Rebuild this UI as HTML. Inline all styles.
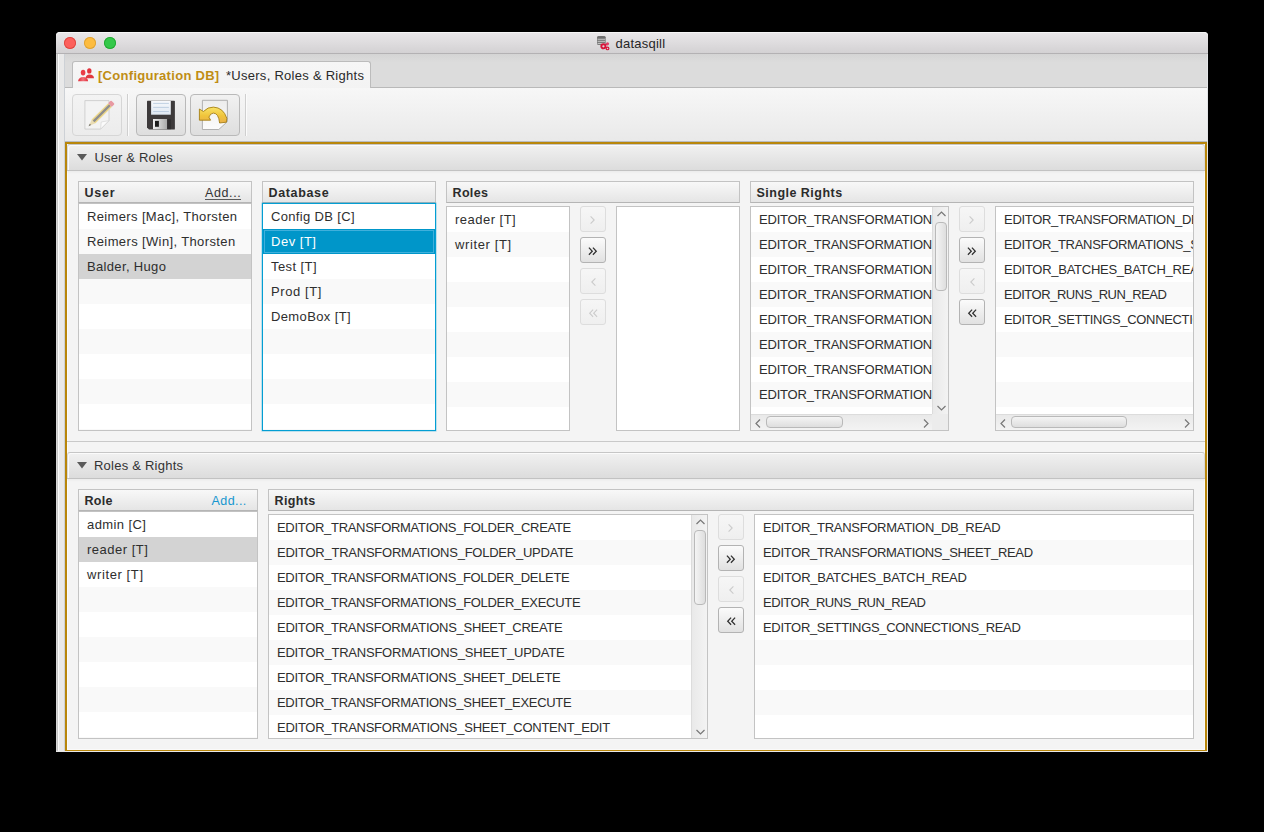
<!DOCTYPE html><html><head><meta charset="utf-8"><style>
*{box-sizing:border-box;margin:0;padding:0}
html,body{width:1264px;height:832px;overflow:hidden;background:#000}
body{position:relative;font-family:"Liberation Sans",sans-serif}
div{position:absolute}
.t{white-space:nowrap}
svg{position:absolute;overflow:visible}
</style></head><body>
<div style="left:56px;top:32px;width:1152px;height:720px;background:#f4f4f4;border-radius:4px 4px 0 0"></div>
<div style="left:56px;top:32px;width:1152px;height:21px;background:linear-gradient(#e9e7e9,#d3d1d3);border-radius:4px 4px 0 0;border-top:1px solid #f6f6f6"></div>
<div style="left:56px;top:53px;width:1152px;height:1px;background:#b3b1b3"></div>
<div style="left:64px;top:37px;width:12px;height:12px;border-radius:50%;background:#fc605c;box-shadow:inset 0 0 0 0.9px #de4841"></div>
<div style="left:84px;top:37px;width:12px;height:12px;border-radius:50%;background:#fdbc40;box-shadow:inset 0 0 0 0.9px #dea236"></div>
<div style="left:104px;top:37px;width:12px;height:12px;border-radius:50%;background:#34c84a;box-shadow:inset 0 0 0 0.9px #24a934"></div>
<svg style="left:594px;top:34px" width="18" height="18" viewBox="0 0 18 18">
<rect x="3" y="2.2" width="8.7" height="8.8" rx="1.5" fill="#7c7c7c"/>
<ellipse cx="7.35" cy="3.2" rx="4.35" ry="1.3" fill="#6e6e6e"/>
<path d="M3.6 5.3h7.5M3.6 7.4h7.5M3.6 9.5h7.5" stroke="#c9c9c9" stroke-width="0.9"/>
<circle cx="9.4" cy="12.3" r="2.1" fill="none" stroke="#d8143a" stroke-width="1.9"/>
<circle cx="13.5" cy="9.8" r="1.6" fill="#e04068"/>
<circle cx="13.5" cy="14.4" r="1.35" fill="none" stroke="#d8143a" stroke-width="1.2"/>
<path d="M11.3 11.3L12.6 10.5M11.3 13.2L12.5 13.9" stroke="#d8143a" stroke-width="1"/>
</svg>
<div class="t" style="left:615.5px;top:37.00px;font-size:13px;line-height:13px;font-weight:400;color:#262626;letter-spacing:0.233px;">datasqill</div>
<div style="left:56px;top:54px;width:9px;height:698px;background:linear-gradient(to right,#d6d6d6 0 1px,#c6c6c6 1px 2px,#fafafa 2px 3px,#e9e9e9 3px 8px,#cdd1d6 8px 9px)"></div>
<div style="left:65px;top:54px;width:1143px;height:33px;background:linear-gradient(#d4d4d4,#dcdcdc 25%,#dcdcdc)"></div>
<div style="left:65px;top:87px;width:1143px;height:1px;background:#b9b9b9"></div>
<div style="left:72px;top:61px;width:299px;height:27px;background:linear-gradient(#f6f6f6,#f3f3f3);border:1px solid #bcbcbc;border-bottom:none;border-radius:3px 3px 0 0"></div>
<svg style="left:74px;top:64px" width="24" height="22" viewBox="0 0 24 22">
<defs><linearGradient id="pb" x1="0" x2="1"><stop offset="0" stop-color="#e22a35"/><stop offset="0.5" stop-color="#f0707a"/><stop offset="1" stop-color="#e22a35"/></linearGradient></defs>
<ellipse cx="15.3" cy="6.9" rx="2.2" ry="2.7" fill="#e2323c"/>
<path d="M11.6 14.2Q12 10.6 15.5 10.6Q19.8 10.8 20 14.2Z" fill="#e0383f"/>
<ellipse cx="9.1" cy="8.6" rx="2.3" ry="2.9" fill="#ea3d47"/>
<path d="M4.1 17.3Q4.5 13 9.2 12.9Q13.8 13 14.1 17.3Z" fill="url(#pb)"/>
</svg>
<div class="t" style="left:98px;top:69.00px;font-size:13px;line-height:13px;font-weight:700;color:#c08d14;letter-spacing:0.291px;">[Configuration DB]</div>
<div class="t" style="left:226px;top:69.00px;font-size:13px;line-height:13px;font-weight:400;color:#2a2a2a;letter-spacing:0.272px;">*Users, Roles &amp; Rights</div>
<div style="left:65px;top:88px;width:1143px;height:54px;background:linear-gradient(#f7f7f7,#e9e9e9)"></div>
<div style="left:65px;top:141px;width:1143px;height:1px;background:#b9bcc2"></div>
<div style="left:72px;top:94px;width:50px;height:42px;border:1px solid #d6d6d6;border-radius:4px;background:linear-gradient(#f3f3f3,#ececec)"></div>
<div style="left:127px;top:94px;width:1px;height:42px;background:#cfcfcf"></div>
<div style="left:128px;top:94px;width:1px;height:42px;background:#fbfbfb"></div>
<div style="left:136px;top:94px;width:50px;height:42px;border:1px solid #b9b9b9;border-radius:4px;background:linear-gradient(#f1f1f1,#dedede)"></div>
<div style="left:190px;top:94px;width:50px;height:42px;border:1px solid #b9b9b9;border-radius:4px;background:linear-gradient(#f1f1f1,#dedede)"></div>
<div style="left:245px;top:94px;width:1px;height:42px;background:#cfcfcf"></div>
<div style="left:246px;top:94px;width:1px;height:42px;background:#fbfbfb"></div>
<svg style="left:78px;top:96px" width="40" height="38" viewBox="0 0 40 38">
<path d="M6.9 4.6H31V24.6L22.6 33.1H6.9Z" fill="#f3f3f3" stroke="#cdcdcd" stroke-width="0.9"/>
<path d="M22.6 33.1L23.2 26L31 24.6Z" fill="#fbfbfb" stroke="#d6d6d6" stroke-width="0.7"/>
<g transform="translate(10.6,30.3) rotate(-44.8)">
<path d="M0 0L7 -2.5H30V2.5H7Z" fill="#e9dcb4"/>
<path d="M0 0L2.6 -0.9V0.9Z" fill="#6d6d6d"/>
<rect x="7" y="-2.5" width="23" height="5" fill="#efd98a"/>
<rect x="7" y="-1.2" width="23" height="2.4" fill="#8f8f8f"/>
<rect x="30" y="-2.6" width="4.2" height="5.2" rx="1" fill="#e89aa2"/>
</g>
</svg>
<svg style="left:142px;top:96px" width="38" height="38" viewBox="0 0 38 38">
<defs><linearGradient id="sh" x1="0" x2="1"><stop offset="0" stop-color="#f0f0f0"/><stop offset="1" stop-color="#a9a9a9"/></linearGradient>
<linearGradient id="lb" x1="0" y1="0" x2="0" y2="1"><stop offset="0" stop-color="#f7f9fc"/><stop offset="1" stop-color="#dfe8f2"/></linearGradient></defs>
<path d="M5.6 4.8H32.2Q32.9 4.8 32.9 5.5V32.9Q32.9 33.6 32.2 33.6H7L5 31.6V5.4Q5 4.8 5.6 4.8Z" fill="#3d3a3b"/>
<rect x="9.1" y="4.9" width="19.7" height="13.8" fill="url(#lb)"/>
<path d="M11.2 7.4H26.9M11.2 11.4H26.9M11.2 15.5H26.9" stroke="#b3c7dc" stroke-width="0.8"/>
<rect x="11" y="23" width="14.1" height="10.2" fill="url(#sh)"/>
<rect x="13" y="24.9" width="3.9" height="5.9" fill="#1c1c1c"/>
<rect x="25.3" y="23.2" width="3.5" height="10" fill="#2f2d2e"/>
</svg>
<svg style="left:194px;top:96px" width="40" height="38" viewBox="0 0 40 38">
<defs><linearGradient id="pg" x1="0" y1="0" x2="0" y2="1"><stop offset="0" stop-color="#ececec"/><stop offset="1" stop-color="#fcfcfc"/></linearGradient>
<linearGradient id="ar" x1="0" y1="0" x2="0" y2="1"><stop offset="0" stop-color="#f8e46a"/><stop offset="0.55" stop-color="#f0c43a"/><stop offset="1" stop-color="#e9b04a"/></linearGradient></defs>
<path d="M8.4 4.3H33.4V25.6L24.8 33.5H8.4Z" fill="url(#pg)" stroke="#a9a9a9" stroke-width="0.9"/>
<path d="M5.4 13L9.4 15.5Q13.8 10.9 19.4 11.1Q29.4 11.6 32.8 22.2L32.4 26.2L25.6 27Q24.6 17.2 19.4 17.1Q16.4 17.2 14.9 21.1L16.6 24.2H5.4Z" fill="url(#ar)" stroke="#9c7406" stroke-width="0.8" stroke-linejoin="round"/>
</svg>
<div style="left:65px;top:142px;width:1142px;height:609px;border:2px solid #b8860b;border-bottom-width:1px;background:#f4f4f4"></div>
<div style="left:1207px;top:54px;width:1px;height:698px;background:#e2e4e7"></div>
<div style="left:1204px;top:144px;width:1px;height:606px;background:#fafafa"></div>
<div style="left:67px;top:749px;width:1138px;height:1px;background:#fafafa"></div>
<div style="left:56px;top:751px;width:1152px;height:1px;background:#e8e8e8"></div>
<div style="left:67px;top:144px;width:1px;height:605px;background:#fbfbfb"></div>
<div style="left:67px;top:144px;width:1138px;height:27px;background:linear-gradient(#f1f1f1,#dcdcdc);border:1px solid #c6c6c6;border-left-color:#d8d8d8;border-right-color:#d8d8d8;border-radius:3px 3px 0 0;box-shadow:inset 1px 1px 0 #fbfbfb"></div>
<div style="left:67px;top:170px;width:1138px;height:1px;background:#c2c2c2"></div>
<div style="left:67px;top:171px;width:1138px;height:3px;background:linear-gradient(rgba(0,0,0,0.035),rgba(0,0,0,0))"></div>
<svg style="left:77px;top:154px" width="10" height="7" viewBox="0 0 10 7"><path d="M0 0H10L5 6.5Z" fill="#5a5a5a"/></svg>
<div class="t" style="left:94.5px;top:150.70px;font-size:13px;line-height:13px;font-weight:400;color:#333;letter-spacing:0.16px;">User &amp; Roles</div>
<div style="left:67px;top:441px;width:1138px;height:1px;background:#c9c9c9"></div>
<div style="left:67px;top:452px;width:1138px;height:27px;background:linear-gradient(#f1f1f1,#dcdcdc);border:1px solid #c6c6c6;border-left-color:#d8d8d8;border-right-color:#d8d8d8;border-radius:3px 3px 0 0;box-shadow:inset 1px 1px 0 #fbfbfb"></div>
<div style="left:67px;top:478px;width:1138px;height:1px;background:#c2c2c2"></div>
<div style="left:67px;top:479px;width:1138px;height:3px;background:linear-gradient(rgba(0,0,0,0.035),rgba(0,0,0,0))"></div>
<svg style="left:77px;top:462px" width="10" height="7" viewBox="0 0 10 7"><path d="M0 0H10L5 6.5Z" fill="#5a5a5a"/></svg>
<div class="t" style="left:94px;top:458.70px;font-size:13px;line-height:13px;font-weight:400;color:#333;letter-spacing:0.23px;">Roles &amp; Rights</div>
<div style="left:78px;top:181px;width:174px;height:22px;background:linear-gradient(#f8f8f8,#e5e5e5);border:1px solid #c3c3c3;border-bottom-color:#b5b5b5"></div>
<div class="t" style="left:84.5px;top:186.92px;font-size:12.5px;line-height:12.5px;font-weight:700;color:#2b2b2b;letter-spacing:0.751px;">User</div>
<div class="t" style="left:205px;top:187.42px;font-size:12.5px;line-height:12.5px;font-weight:400;color:#333;letter-spacing:0.621px;">Add...</div>
<div style="left:205px;top:199px;width:36px;height:1px;background:#5a5a5a"></div>
<div style="left:78px;top:203px;width:174px;height:228px;border:1px solid #c3c3c3;border-top:none;background:#fff"><div style="left:0px;top:0px;width:172px;height:227px;overflow:hidden;background:#fff"><div style="left:0px;top:1px;width:172px;height:25px;background:#ffffff"></div><div class="t" style="left:8px;top:7.00px;font-size:13px;line-height:13px;font-weight:400;color:#2e2e2e;letter-spacing:0.361px;">Reimers [Mac], Thorsten</div><div style="left:0px;top:26px;width:172px;height:25px;background:#f9f9f9"></div><div class="t" style="left:8px;top:32.00px;font-size:13px;line-height:13px;font-weight:400;color:#2e2e2e;letter-spacing:0.373px;">Reimers [Win], Thorsten</div><div style="left:0px;top:51px;width:172px;height:25px;background:#d3d3d3"></div><div class="t" style="left:8px;top:57.00px;font-size:13px;line-height:13px;font-weight:400;color:#2e2e2e;letter-spacing:0.336px;">Balder, Hugo</div><div style="left:0px;top:76px;width:172px;height:25px;background:#f9f9f9"></div><div style="left:0px;top:101px;width:172px;height:25px;background:#ffffff"></div><div style="left:0px;top:126px;width:172px;height:25px;background:#f9f9f9"></div><div style="left:0px;top:151px;width:172px;height:25px;background:#ffffff"></div><div style="left:0px;top:176px;width:172px;height:25px;background:#f9f9f9"></div><div style="left:0px;top:201px;width:172px;height:25px;background:#ffffff"></div><div style="left:0px;top:226px;width:172px;height:25px;background:#f9f9f9"></div></div></div>
<div style="left:78px;top:203px;width:174px;height:1px;background:#c2c2c2"></div>
<div style="left:262px;top:181px;width:174px;height:22px;background:linear-gradient(#f8f8f8,#e5e5e5);border:1px solid #c3c3c3;border-bottom-color:#b5b5b5"></div>
<div class="t" style="left:268.5px;top:186.92px;font-size:12.5px;line-height:12.5px;font-weight:700;color:#2b2b2b;letter-spacing:0.651px;">Database</div>
<div style="left:262px;top:203px;width:174px;height:228px;border:1px solid #039ed3;box-shadow:0 0 0 0.5px rgba(3,158,211,0.45),inset 0 0 0 0.5px rgba(3,158,211,0.6);background:#fff"><div style="left:0px;top:0px;width:172px;height:226px;overflow:hidden;background:#fff"><div style="left:0px;top:0px;width:172px;height:25px;background:#ffffff"></div><div class="t" style="left:8px;top:6.00px;font-size:13px;line-height:13px;font-weight:400;color:#2e2e2e;letter-spacing:0.34px;">Config DB [C]</div><div style="left:0px;top:25px;width:172px;height:25px;background:#0096c9"></div><div style="left:1px;top:26px;width:170px;height:23px;border:1px solid #3fb0dc"></div><div class="t" style="left:8px;top:31.00px;font-size:13px;line-height:13px;font-weight:400;color:#fff;letter-spacing:0.513px;">Dev [T]</div><div style="left:0px;top:50px;width:172px;height:25px;background:#ffffff"></div><div class="t" style="left:8px;top:56.00px;font-size:13px;line-height:13px;font-weight:400;color:#2e2e2e;letter-spacing:0.422px;">Test [T]</div><div style="left:0px;top:75px;width:172px;height:25px;background:#f9f9f9"></div><div class="t" style="left:8px;top:81.00px;font-size:13px;line-height:13px;font-weight:400;color:#2e2e2e;letter-spacing:0.594px;">Prod [T]</div><div style="left:0px;top:100px;width:172px;height:25px;background:#ffffff"></div><div class="t" style="left:8px;top:106.00px;font-size:13px;line-height:13px;font-weight:400;color:#2e2e2e;letter-spacing:0.376px;">DemoBox [T]</div><div style="left:0px;top:125px;width:172px;height:25px;background:#f9f9f9"></div><div style="left:0px;top:150px;width:172px;height:25px;background:#ffffff"></div><div style="left:0px;top:175px;width:172px;height:25px;background:#f9f9f9"></div><div style="left:0px;top:200px;width:172px;height:25px;background:#ffffff"></div><div style="left:0px;top:225px;width:172px;height:25px;background:#f9f9f9"></div></div></div>
<div style="left:446px;top:181px;width:294px;height:22px;background:linear-gradient(#f8f8f8,#e5e5e5);border:1px solid #c3c3c3;border-bottom-color:#b5b5b5"></div>
<div class="t" style="left:452.5px;top:186.92px;font-size:12.5px;line-height:12.5px;font-weight:700;color:#2b2b2b;letter-spacing:0.351px;">Roles</div>
<div style="left:446px;top:206px;width:124px;height:225px;border:1px solid #c3c3c3;background:#fff"><div style="left:0px;top:0px;width:122px;height:223px;overflow:hidden;background:#fff"><div style="left:0px;top:0px;width:122px;height:25px;background:#ffffff"></div><div class="t" style="left:8px;top:6.00px;font-size:13px;line-height:13px;font-weight:400;color:#2e2e2e;letter-spacing:0.484px;">reader [T]</div><div style="left:0px;top:25px;width:122px;height:25px;background:#f9f9f9"></div><div class="t" style="left:8px;top:31.00px;font-size:13px;line-height:13px;font-weight:400;color:#2e2e2e;letter-spacing:0.624px;">writer [T]</div><div style="left:0px;top:50px;width:122px;height:25px;background:#ffffff"></div><div style="left:0px;top:75px;width:122px;height:25px;background:#f9f9f9"></div><div style="left:0px;top:100px;width:122px;height:25px;background:#ffffff"></div><div style="left:0px;top:125px;width:122px;height:25px;background:#f9f9f9"></div><div style="left:0px;top:150px;width:122px;height:25px;background:#ffffff"></div><div style="left:0px;top:175px;width:122px;height:25px;background:#f9f9f9"></div><div style="left:0px;top:200px;width:122px;height:25px;background:#ffffff"></div></div></div>
<div style="left:580px;top:206px;width:26px;height:26px;border:1px solid #dddddd;border-radius:3px;background:linear-gradient(#f6f6f6,#efefef)"><svg style="left:-1px;top:-1px" width="26" height="26" viewBox="0 0 26 26"><path d="M10.6 10.3L14.2 14L10.6 17.7" fill="none" stroke="#cbcbcb" stroke-width="1.1"/></svg></div>
<div style="left:580px;top:237px;width:26px;height:26px;border:1px solid #b3b3b3;border-radius:3px;background:linear-gradient(#fbfbfb,#e1e1e1)"><svg style="left:-1px;top:-1px" width="26" height="26" viewBox="0 0 26 26"><path d="M8.9 10.6L12.3 14.2L8.9 17.8M12.9 10.6L16.3 14.2L12.9 17.8" fill="none" stroke="#303030" stroke-width="1.25"/></svg></div>
<div style="left:580px;top:268px;width:26px;height:26px;border:1px solid #dddddd;border-radius:3px;background:linear-gradient(#f6f6f6,#efefef)"><svg style="left:-1px;top:-1px" width="26" height="26" viewBox="0 0 26 26"><path d="M15.4 10.3L11.8 14L15.4 17.7" fill="none" stroke="#cbcbcb" stroke-width="1.1"/></svg></div>
<div style="left:580px;top:299px;width:26px;height:26px;border:1px solid #dddddd;border-radius:3px;background:linear-gradient(#f6f6f6,#efefef)"><svg style="left:-1px;top:-1px" width="26" height="26" viewBox="0 0 26 26"><path d="M13.1 10.6L9.7 14.2L13.1 17.8M17.1 10.6L13.7 14.2L17.1 17.8" fill="none" stroke="#cbcbcb" stroke-width="1.1"/></svg></div>
<div style="left:616px;top:206px;width:124px;height:225px;border:1px solid #c3c3c3;background:#fff"><div style="left:0px;top:0px;width:122px;height:223px;overflow:hidden;background:#fff"></div></div>
<div style="left:750px;top:181px;width:444px;height:22px;background:linear-gradient(#f8f8f8,#e5e5e5);border:1px solid #c3c3c3;border-bottom-color:#b5b5b5"></div>
<div class="t" style="left:756.5px;top:186.92px;font-size:12.5px;line-height:12.5px;font-weight:700;color:#2b2b2b;letter-spacing:0.479px;">Single Rights</div>
<div style="left:750px;top:206px;width:199px;height:225px;border:1px solid #c3c3c3;background:#fff"><div style="left:0px;top:0px;width:181px;height:207px;overflow:hidden;background:#fff"><div style="left:0px;top:0px;width:181px;height:25px;background:#ffffff"></div><div class="t" style="left:8px;top:6.00px;font-size:13px;line-height:13px;font-weight:400;color:#2e2e2e;letter-spacing:-0.2px;">EDITOR_TRANSFORMATION</div><div style="left:0px;top:25px;width:181px;height:25px;background:#f9f9f9"></div><div class="t" style="left:8px;top:31.00px;font-size:13px;line-height:13px;font-weight:400;color:#2e2e2e;letter-spacing:-0.2px;">EDITOR_TRANSFORMATION</div><div style="left:0px;top:50px;width:181px;height:25px;background:#ffffff"></div><div class="t" style="left:8px;top:56.00px;font-size:13px;line-height:13px;font-weight:400;color:#2e2e2e;letter-spacing:-0.2px;">EDITOR_TRANSFORMATION</div><div style="left:0px;top:75px;width:181px;height:25px;background:#f9f9f9"></div><div class="t" style="left:8px;top:81.00px;font-size:13px;line-height:13px;font-weight:400;color:#2e2e2e;letter-spacing:-0.2px;">EDITOR_TRANSFORMATION</div><div style="left:0px;top:100px;width:181px;height:25px;background:#ffffff"></div><div class="t" style="left:8px;top:106.00px;font-size:13px;line-height:13px;font-weight:400;color:#2e2e2e;letter-spacing:-0.2px;">EDITOR_TRANSFORMATION</div><div style="left:0px;top:125px;width:181px;height:25px;background:#f9f9f9"></div><div class="t" style="left:8px;top:131.00px;font-size:13px;line-height:13px;font-weight:400;color:#2e2e2e;letter-spacing:-0.2px;">EDITOR_TRANSFORMATION</div><div style="left:0px;top:150px;width:181px;height:25px;background:#ffffff"></div><div class="t" style="left:8px;top:156.00px;font-size:13px;line-height:13px;font-weight:400;color:#2e2e2e;letter-spacing:-0.2px;">EDITOR_TRANSFORMATION</div><div style="left:0px;top:175px;width:181px;height:25px;background:#f9f9f9"></div><div class="t" style="left:8px;top:181.00px;font-size:13px;line-height:13px;font-weight:400;color:#2e2e2e;letter-spacing:-0.2px;">EDITOR_TRANSFORMATION</div><div style="left:0px;top:200px;width:181px;height:25px;background:#ffffff"></div></div><div style="left:181px;top:0px;width:16px;height:207px;background:linear-gradient(to right,#e9e9e9,#f3f3f3);border-left:1px solid #dcdcdc"><svg style="left:3.5px;top:3.5px" width="9" height="6" viewBox="0 0 9 6"><path d="M0.5 5L4.5 1L8.5 5" fill="none" stroke="#777" stroke-width="1.2"/></svg><svg style="left:3.5px;top:197.5px" width="9" height="6" viewBox="0 0 9 6"><path d="M0.5 1L4.5 5L8.5 1" fill="none" stroke="#777" stroke-width="1.2"/></svg><div style="left:2px;top:15px;width:12px;height:69px;border-radius:4px;background:linear-gradient(to right,#f4f4f4,#dedede);border:1px solid #b9b9b9"></div></div><div style="left:0px;top:207px;width:181px;height:16px;background:linear-gradient(#e9e9e9,#f3f3f3);border-top:1px solid #dcdcdc"><svg style="left:3.5px;top:3.5px" width="6" height="9" viewBox="0 0 6 9"><path d="M5 0.5L1 4.5L5 8.5" fill="none" stroke="#777" stroke-width="1.2"/></svg><svg style="left:171.5px;top:3.5px" width="6" height="9" viewBox="0 0 6 9"><path d="M1 0.5L5 4.5L1 8.5" fill="none" stroke="#777" stroke-width="1.2"/></svg><div style="left:15px;top:1px;width:77px;height:12px;border-radius:4px;background:linear-gradient(#f4f4f4,#dedede);border:1px solid #b9b9b9"></div></div><div style="left:181px;top:207px;width:16px;height:16px;background:#ececec"></div></div>
<div style="left:959px;top:206px;width:26px;height:26px;border:1px solid #dddddd;border-radius:3px;background:linear-gradient(#f6f6f6,#efefef)"><svg style="left:-1px;top:-1px" width="26" height="26" viewBox="0 0 26 26"><path d="M10.6 10.3L14.2 14L10.6 17.7" fill="none" stroke="#cbcbcb" stroke-width="1.1"/></svg></div>
<div style="left:959px;top:237px;width:26px;height:26px;border:1px solid #b3b3b3;border-radius:3px;background:linear-gradient(#fbfbfb,#e1e1e1)"><svg style="left:-1px;top:-1px" width="26" height="26" viewBox="0 0 26 26"><path d="M8.9 10.6L12.3 14.2L8.9 17.8M12.9 10.6L16.3 14.2L12.9 17.8" fill="none" stroke="#303030" stroke-width="1.25"/></svg></div>
<div style="left:959px;top:268px;width:26px;height:26px;border:1px solid #dddddd;border-radius:3px;background:linear-gradient(#f6f6f6,#efefef)"><svg style="left:-1px;top:-1px" width="26" height="26" viewBox="0 0 26 26"><path d="M15.4 10.3L11.8 14L15.4 17.7" fill="none" stroke="#cbcbcb" stroke-width="1.1"/></svg></div>
<div style="left:959px;top:299px;width:26px;height:26px;border:1px solid #b3b3b3;border-radius:3px;background:linear-gradient(#fbfbfb,#e1e1e1)"><svg style="left:-1px;top:-1px" width="26" height="26" viewBox="0 0 26 26"><path d="M13.1 10.6L9.7 14.2L13.1 17.8M17.1 10.6L13.7 14.2L17.1 17.8" fill="none" stroke="#303030" stroke-width="1.25"/></svg></div>
<div style="left:995px;top:206px;width:199px;height:225px;border:1px solid #c3c3c3;background:#fff"><div style="left:0px;top:0px;width:197px;height:207px;overflow:hidden;background:#fff"><div style="left:0px;top:0px;width:197px;height:25px;background:#ffffff"></div><div class="t" style="left:8px;top:6.00px;font-size:13px;line-height:13px;font-weight:400;color:#2e2e2e;letter-spacing:-0.295px;">EDITOR_TRANSFORMATION_DB_READ</div><div style="left:0px;top:25px;width:197px;height:25px;background:#f9f9f9"></div><div class="t" style="left:8px;top:31.00px;font-size:13px;line-height:13px;font-weight:400;color:#2e2e2e;letter-spacing:-0.303px;">EDITOR_TRANSFORMATIONS_SHEET_READ</div><div style="left:0px;top:50px;width:197px;height:25px;background:#ffffff"></div><div class="t" style="left:8px;top:56.00px;font-size:13px;line-height:13px;font-weight:400;color:#2e2e2e;letter-spacing:-0.265px;">EDITOR_BATCHES_BATCH_READ</div><div style="left:0px;top:75px;width:197px;height:25px;background:#f9f9f9"></div><div class="t" style="left:8px;top:81.00px;font-size:13px;line-height:13px;font-weight:400;color:#2e2e2e;letter-spacing:-0.459px;">EDITOR_RUNS_RUN_READ</div><div style="left:0px;top:100px;width:197px;height:25px;background:#ffffff"></div><div class="t" style="left:8px;top:106.00px;font-size:13px;line-height:13px;font-weight:400;color:#2e2e2e;letter-spacing:-0.321px;">EDITOR_SETTINGS_CONNECTIONS_READ</div><div style="left:0px;top:125px;width:197px;height:25px;background:#f9f9f9"></div><div style="left:0px;top:150px;width:197px;height:25px;background:#ffffff"></div><div style="left:0px;top:175px;width:197px;height:25px;background:#f9f9f9"></div><div style="left:0px;top:200px;width:197px;height:25px;background:#ffffff"></div></div><div style="left:0px;top:207px;width:197px;height:16px;background:linear-gradient(#e9e9e9,#f3f3f3);border-top:1px solid #dcdcdc"><svg style="left:3.5px;top:3.5px" width="6" height="9" viewBox="0 0 6 9"><path d="M5 0.5L1 4.5L5 8.5" fill="none" stroke="#777" stroke-width="1.2"/></svg><svg style="left:187.5px;top:3.5px" width="6" height="9" viewBox="0 0 6 9"><path d="M1 0.5L5 4.5L1 8.5" fill="none" stroke="#777" stroke-width="1.2"/></svg><div style="left:15px;top:1px;width:116px;height:12px;border-radius:4px;background:linear-gradient(#f4f4f4,#dedede);border:1px solid #b9b9b9"></div></div></div>
<div style="left:78px;top:489px;width:180px;height:22px;background:linear-gradient(#f8f8f8,#e5e5e5);border:1px solid #c3c3c3;border-bottom-color:#b5b5b5"></div>
<div class="t" style="left:84.5px;top:494.92px;font-size:12.5px;line-height:12.5px;font-weight:700;color:#2b2b2b;letter-spacing:0.277px;">Role</div>
<div class="t" style="left:211.5px;top:495.42px;font-size:12.5px;line-height:12.5px;font-weight:400;color:#1596cf;letter-spacing:0.421px;">Add...</div>
<div style="left:78px;top:511px;width:180px;height:228px;border:1px solid #c3c3c3;border-top:none;background:#fff"><div style="left:0px;top:0px;width:178px;height:227px;overflow:hidden;background:#fff"><div style="left:0px;top:1px;width:178px;height:25px;background:#ffffff"></div><div class="t" style="left:8px;top:7.00px;font-size:13px;line-height:13px;font-weight:400;color:#2e2e2e;letter-spacing:0.407px;">admin [C]</div><div style="left:0px;top:26px;width:178px;height:25px;background:#d3d3d3"></div><div class="t" style="left:8px;top:32.00px;font-size:13px;line-height:13px;font-weight:400;color:#2e2e2e;letter-spacing:0.494px;">reader [T]</div><div style="left:0px;top:51px;width:178px;height:25px;background:#ffffff"></div><div class="t" style="left:8px;top:57.00px;font-size:13px;line-height:13px;font-weight:400;color:#2e2e2e;letter-spacing:0.604px;">writer [T]</div><div style="left:0px;top:76px;width:178px;height:25px;background:#f9f9f9"></div><div style="left:0px;top:101px;width:178px;height:25px;background:#ffffff"></div><div style="left:0px;top:126px;width:178px;height:25px;background:#f9f9f9"></div><div style="left:0px;top:151px;width:178px;height:25px;background:#ffffff"></div><div style="left:0px;top:176px;width:178px;height:25px;background:#f9f9f9"></div><div style="left:0px;top:201px;width:178px;height:25px;background:#ffffff"></div><div style="left:0px;top:226px;width:178px;height:25px;background:#f9f9f9"></div></div></div>
<div style="left:78px;top:511px;width:180px;height:1px;background:#c2c2c2"></div>
<div style="left:268px;top:489px;width:926px;height:22px;background:linear-gradient(#f8f8f8,#e5e5e5);border:1px solid #c3c3c3;border-bottom-color:#b5b5b5"></div>
<div class="t" style="left:274.5px;top:494.92px;font-size:12.5px;line-height:12.5px;font-weight:700;color:#2b2b2b;letter-spacing:0.352px;">Rights</div>
<div style="left:268px;top:514px;width:440px;height:225px;border:1px solid #c3c3c3;background:#fff"><div style="left:0px;top:0px;width:422px;height:223px;overflow:hidden;background:#fff"><div style="left:0px;top:0px;width:422px;height:25px;background:#ffffff"></div><div class="t" style="left:8px;top:6.00px;font-size:13px;line-height:13px;font-weight:400;color:#2e2e2e;letter-spacing:-0.301px;">EDITOR_TRANSFORMATIONS_FOLDER_CREATE</div><div style="left:0px;top:25px;width:422px;height:25px;background:#f9f9f9"></div><div class="t" style="left:8px;top:31.00px;font-size:13px;line-height:13px;font-weight:400;color:#2e2e2e;letter-spacing:-0.237px;">EDITOR_TRANSFORMATIONS_FOLDER_UPDATE</div><div style="left:0px;top:50px;width:422px;height:25px;background:#ffffff"></div><div class="t" style="left:8px;top:56.00px;font-size:13px;line-height:13px;font-weight:400;color:#2e2e2e;letter-spacing:-0.312px;">EDITOR_TRANSFORMATIONS_FOLDER_DELETE</div><div style="left:0px;top:75px;width:422px;height:25px;background:#f9f9f9"></div><div class="t" style="left:8px;top:81.00px;font-size:13px;line-height:13px;font-weight:400;color:#2e2e2e;letter-spacing:-0.302px;">EDITOR_TRANSFORMATIONS_FOLDER_EXECUTE</div><div style="left:0px;top:100px;width:422px;height:25px;background:#ffffff"></div><div class="t" style="left:8px;top:106.00px;font-size:13px;line-height:13px;font-weight:400;color:#2e2e2e;letter-spacing:-0.287px;">EDITOR_TRANSFORMATIONS_SHEET_CREATE</div><div style="left:0px;top:125px;width:422px;height:25px;background:#f9f9f9"></div><div class="t" style="left:8px;top:131.00px;font-size:13px;line-height:13px;font-weight:400;color:#2e2e2e;letter-spacing:-0.23px;">EDITOR_TRANSFORMATIONS_SHEET_UPDATE</div><div style="left:0px;top:150px;width:422px;height:25px;background:#ffffff"></div><div class="t" style="left:8px;top:156.00px;font-size:13px;line-height:13px;font-weight:400;color:#2e2e2e;letter-spacing:-0.31px;">EDITOR_TRANSFORMATIONS_SHEET_DELETE</div><div style="left:0px;top:175px;width:422px;height:25px;background:#f9f9f9"></div><div class="t" style="left:8px;top:181.00px;font-size:13px;line-height:13px;font-weight:400;color:#2e2e2e;letter-spacing:-0.297px;">EDITOR_TRANSFORMATIONS_SHEET_EXECUTE</div><div style="left:0px;top:200px;width:422px;height:25px;background:#ffffff"></div><div class="t" style="left:8px;top:206.00px;font-size:13px;line-height:13px;font-weight:400;color:#2e2e2e;letter-spacing:-0.255px;">EDITOR_TRANSFORMATIONS_SHEET_CONTENT_EDIT</div></div><div style="left:422px;top:0px;width:16px;height:223px;background:linear-gradient(to right,#e9e9e9,#f3f3f3);border-left:1px solid #dcdcdc"><svg style="left:3.5px;top:3.5px" width="9" height="6" viewBox="0 0 9 6"><path d="M0.5 5L4.5 1L8.5 5" fill="none" stroke="#777" stroke-width="1.2"/></svg><svg style="left:3.5px;top:213.5px" width="9" height="6" viewBox="0 0 9 6"><path d="M0.5 1L4.5 5L8.5 1" fill="none" stroke="#777" stroke-width="1.2"/></svg><div style="left:2px;top:15px;width:12px;height:75px;border-radius:4px;background:linear-gradient(to right,#f4f4f4,#dedede);border:1px solid #b9b9b9"></div></div></div>
<div style="left:718px;top:514px;width:26px;height:26px;border:1px solid #dddddd;border-radius:3px;background:linear-gradient(#f6f6f6,#efefef)"><svg style="left:-1px;top:-1px" width="26" height="26" viewBox="0 0 26 26"><path d="M10.6 10.3L14.2 14L10.6 17.7" fill="none" stroke="#cbcbcb" stroke-width="1.1"/></svg></div>
<div style="left:718px;top:545px;width:26px;height:26px;border:1px solid #b3b3b3;border-radius:3px;background:linear-gradient(#fbfbfb,#e1e1e1)"><svg style="left:-1px;top:-1px" width="26" height="26" viewBox="0 0 26 26"><path d="M8.9 10.6L12.3 14.2L8.9 17.8M12.9 10.6L16.3 14.2L12.9 17.8" fill="none" stroke="#303030" stroke-width="1.25"/></svg></div>
<div style="left:718px;top:576px;width:26px;height:26px;border:1px solid #dddddd;border-radius:3px;background:linear-gradient(#f6f6f6,#efefef)"><svg style="left:-1px;top:-1px" width="26" height="26" viewBox="0 0 26 26"><path d="M15.4 10.3L11.8 14L15.4 17.7" fill="none" stroke="#cbcbcb" stroke-width="1.1"/></svg></div>
<div style="left:718px;top:607px;width:26px;height:26px;border:1px solid #b3b3b3;border-radius:3px;background:linear-gradient(#fbfbfb,#e1e1e1)"><svg style="left:-1px;top:-1px" width="26" height="26" viewBox="0 0 26 26"><path d="M13.1 10.6L9.7 14.2L13.1 17.8M17.1 10.6L13.7 14.2L17.1 17.8" fill="none" stroke="#303030" stroke-width="1.25"/></svg></div>
<div style="left:754px;top:514px;width:440px;height:225px;border:1px solid #c3c3c3;background:#fff"><div style="left:0px;top:0px;width:438px;height:223px;overflow:hidden;background:#fff"><div style="left:0px;top:0px;width:438px;height:25px;background:#ffffff"></div><div class="t" style="left:8px;top:6.00px;font-size:13px;line-height:13px;font-weight:400;color:#2e2e2e;letter-spacing:-0.295px;">EDITOR_TRANSFORMATION_DB_READ</div><div style="left:0px;top:25px;width:438px;height:25px;background:#f9f9f9"></div><div class="t" style="left:8px;top:31.00px;font-size:13px;line-height:13px;font-weight:400;color:#2e2e2e;letter-spacing:-0.303px;">EDITOR_TRANSFORMATIONS_SHEET_READ</div><div style="left:0px;top:50px;width:438px;height:25px;background:#ffffff"></div><div class="t" style="left:8px;top:56.00px;font-size:13px;line-height:13px;font-weight:400;color:#2e2e2e;letter-spacing:-0.265px;">EDITOR_BATCHES_BATCH_READ</div><div style="left:0px;top:75px;width:438px;height:25px;background:#f9f9f9"></div><div class="t" style="left:8px;top:81.00px;font-size:13px;line-height:13px;font-weight:400;color:#2e2e2e;letter-spacing:-0.459px;">EDITOR_RUNS_RUN_READ</div><div style="left:0px;top:100px;width:438px;height:25px;background:#ffffff"></div><div class="t" style="left:8px;top:106.00px;font-size:13px;line-height:13px;font-weight:400;color:#2e2e2e;letter-spacing:-0.321px;">EDITOR_SETTINGS_CONNECTIONS_READ</div><div style="left:0px;top:125px;width:438px;height:25px;background:#f9f9f9"></div><div style="left:0px;top:150px;width:438px;height:25px;background:#ffffff"></div><div style="left:0px;top:175px;width:438px;height:25px;background:#f9f9f9"></div><div style="left:0px;top:200px;width:438px;height:25px;background:#ffffff"></div></div></div>
</body></html>
